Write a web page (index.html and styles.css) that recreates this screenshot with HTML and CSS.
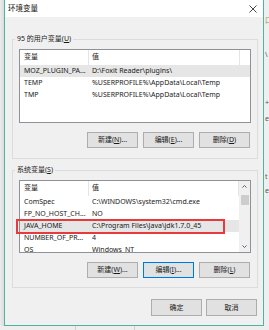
FILE: index.html
```html
<!DOCTYPE html>
<html lang="zh-CN">
<head>
<meta charset="utf-8">
<title>环境变量</title>
<link rel="stylesheet" href="styles.css">
</head>
<body>
<div class="desk">
  <div class="gutter-l"></div>
  <div class="window">
    <div class="titlebar">
      <span class="title">环境变量</span>
      <svg class="close" width="8" height="8" viewBox="0 0 8 8"><path d="M0.5 0.5 L7.5 7.5 M7.5 0.5 L0.5 7.5" stroke="#333" stroke-width="0.9" fill="none"/></svg>
    </div>
    <div class="client">
      <fieldset class="group g1">
        <legend>95 的用户变量(<u>U</u>)</legend>
        <div class="list l1">
          <div class="hdr cols3"><span class="c1">变量</span><span class="c2">值</span><span class="c3"></span></div>
          <div class="row cols3 sel"><span class="c1">MOZ_PLUGIN_PA...</span><span class="c2">D:\Foxit Reader\plugins\</span></div>
          <div class="row cols3"><span class="c1">TEMP</span><span class="c2">%USERPROFILE%\AppData\Local\Temp</span></div>
          <div class="row cols3"><span class="c1">TMP</span><span class="c2">%USERPROFILE%\AppData\Local\Temp</span></div>
        </div>
        <div class="btns">
          <button class="btn">新建(<u>N</u>)...</button>
          <button class="btn">编辑(<u>E</u>)...</button>
          <button class="btn">删除(<u>D</u>)</button>
        </div>
      </fieldset>
      <fieldset class="group g2">
        <legend>系统变量(<u>S</u>)</legend>
        <div class="list l2">
          <div class="pane">
            <div class="hdr cols2"><span class="c1">变量</span><span class="c2">值</span></div>
            <div class="row cols2"><span class="c1">ComSpec</span><span class="c2">C:\WINDOWS\system32\cmd.exe</span></div>
            <div class="row cols2"><span class="c1">FP_NO_HOST_CH...</span><span class="c2">NO</span></div>
            <div class="row cols2 sel"><span class="c1">JAVA_HOME</span><span class="c2">C:\Program Files\Java\jdk1.7.0_45</span></div>
            <div class="row cols2"><span class="c1">NUMBER_OF_PR...</span><span class="c2">4</span></div>
            <div class="row cols2"><span class="c1">OS</span><span class="c2">Windows_NT</span></div>
          </div>
          <div class="vscroll">
            <svg class="arrow" width="11" height="11" viewBox="0 0 11 11"><path d="M3.5 6.5 L5.5 4.5 L7.5 6.5" stroke="#606060" stroke-width="1" fill="none"/></svg>
            <div class="thumb"></div>
            <div class="track"></div>
            <svg class="arrow" width="11" height="11" viewBox="0 0 11 11"><path d="M3.5 4.5 L5.5 6.5 L7.5 4.5" stroke="#606060" stroke-width="1" fill="none"/></svg>
          </div>
          <div class="mark"></div>
        </div>
        <div class="btns">
          <button class="btn">新建(<u>W</u>)...</button>
          <button class="btn focus">编辑(<u>I</u>)...</button>
          <button class="btn">删除(<u>L</u>)</button>
        </div>
      </fieldset>
      <div class="dlg-btns">
        <button class="btn">确定</button>
        <button class="btn">取消</button>
      </div>
    </div>
  </div>
  <div class="gutter-r">
    <span class="frag f1">口</span>
    <span class="frag f2">\</span>
    <span class="frag f3">+</span>
    <span class="frag f4">e</span>
    <span class="frag f5">t</span>
    <span class="frag f6">e</span>
  </div>
</div>
<div class="bottom-strip">
  <span class="vline v1"></span>
  <span class="vline v2"></span>
</div>
</body>
</html>
```

FILE: styles.css
```css
html, body {
  margin: 0;
  padding: 0;
}
body {
  width: 269px;
  height: 330px;
  overflow: hidden;
  background: #e9e9e9;
  font-family: "Noto Sans", "Noto Sans CJK SC", sans-serif;
  font-size: 7px;
  color: #1a1a1a;
}
.desk {
  display: flex;
  height: 326px;
}
.gutter-l {
  width: 4px;
  background: linear-gradient(to right, #ececec, #dcdcdc);
}
.window {
  width: 258px;
  border: 1px solid #4fb3a1;
  border-top: none;
  display: flex;
  flex-direction: column;
  background: #f0f0f0;
}
.titlebar {
  height: 17px;
  background: #ffffff;
  display: flex;
  align-items: center;
  justify-content: space-between;
  padding: 0 6px 0 3px;
}
.title {
  font-size: 7.5px;
  color: #111;
  line-height: 17px;
}
.close {
  display: block;
}
.client {
  flex: 1;
  padding: 0 5px 0 7px;
  display: flex;
  flex-direction: column;
}
.group {
  margin: 0;
  border: 1px solid #dcdcdc;
  padding: 5px 6px 10px 6px;
  min-width: 0;
}
.g1 {
  margin-top: 17px;
}
.g2 {
  margin-top: 6px;
  padding-bottom: 9px;
}
.group legend {
  padding: 0 2px;
  margin-left: -4px;
  line-height: 10px;
  font-size: 7px;
  color: #1a1a1a;
}
.list {
  background: #ffffff;
  border: 1px solid #8e9196;
}
.l1 {
  height: 72px;
}
.l2 {
  height: 71px;
  display: flex;
  position: relative;
}
.pane {
  width: 219px;
  overflow: hidden;
}
.hdr, .row {
  display: grid;
  white-space: nowrap;
}
.cols3 {
  grid-template-columns: 69px 151px 10px;
}
.cols2 {
  grid-template-columns: 69px 150px;
}
.hdr {
  height: 15px;
  line-height: 14px;
}
.hdr span {
  border-right: 1px solid #e5e5e5;
}
.hdr .c3 {
  border-right: none;
}
.row {
  height: 12px;
  line-height: 12px;
}
.row span {
  overflow: hidden;
}
.c1 {
  padding-left: 4px;
}
.c2 {
  padding-left: 3px;
}
.sel {
  background: #e6e6e6;
}
.vscroll {
  width: 11px;
  background: #f0f0f0;
  display: flex;
  flex-direction: column;
  align-items: center;
}
.arrow {
  display: block;
  flex: none;
}
.thumb {
  width: 8px;
  height: 10px;
  margin-top: 3px;
  background: #cdcdcd;
  flex: none;
}
.track {
  flex: 1;
}
.mark {
  position: absolute;
  left: -4px;
  top: 38px;
  width: 205px;
  height: 11px;
  border: 2px solid #e8393b;
}
.btns {
  display: flex;
  justify-content: flex-end;
  gap: 5px;
  margin-top: 9px;
  padding-right: 1px;
}
.btn {
  width: 51px;
  height: 16px;
  padding: 0;
  margin: 0;
  background: #e1e1e1;
  border: 1px solid #adadad;
  font-family: "Noto Sans", "Noto Sans CJK SC", sans-serif;
  font-size: 7px;
  color: #1a1a1a;
  line-height: 14px;
  text-align: center;
}
.btn.focus {
  border-color: #0078d7;
  box-shadow: inset 0 0 0 1px #cfe3f5;
}
.dlg-btns {
  display: flex;
  justify-content: flex-end;
  gap: 4px;
  margin-top: 11px;
  padding-right: 1px;
}
.dlg-btns .btn {
  height: 17px;
}
.gutter-r {
  flex: 1;
  background: #efefef;
  display: flex;
  flex-direction: column;
  overflow: hidden;
  color: #555;
  font-size: 7px;
  line-height: 8px;
}
.frag {
  display: block;
  padding-left: 1px;
}
.f1 { margin-top: 17px; color: #9a8a40; }
.f2 { margin-top: 26px; }
.f3 { margin-top: 40px; }
.f4 { margin-top: 8px; }
.f5 { margin-top: 50px; }
.f6 { margin-top: 6px; }
.bottom-strip {
  height: 4px;
  background: #eeeeee;
  display: flex;
}
.vline {
  display: block;
  width: 1px;
  background: #cfcfcf;
}
.v1 { margin-left: 75px; }
.v2 { margin-left: 58px; }
```
